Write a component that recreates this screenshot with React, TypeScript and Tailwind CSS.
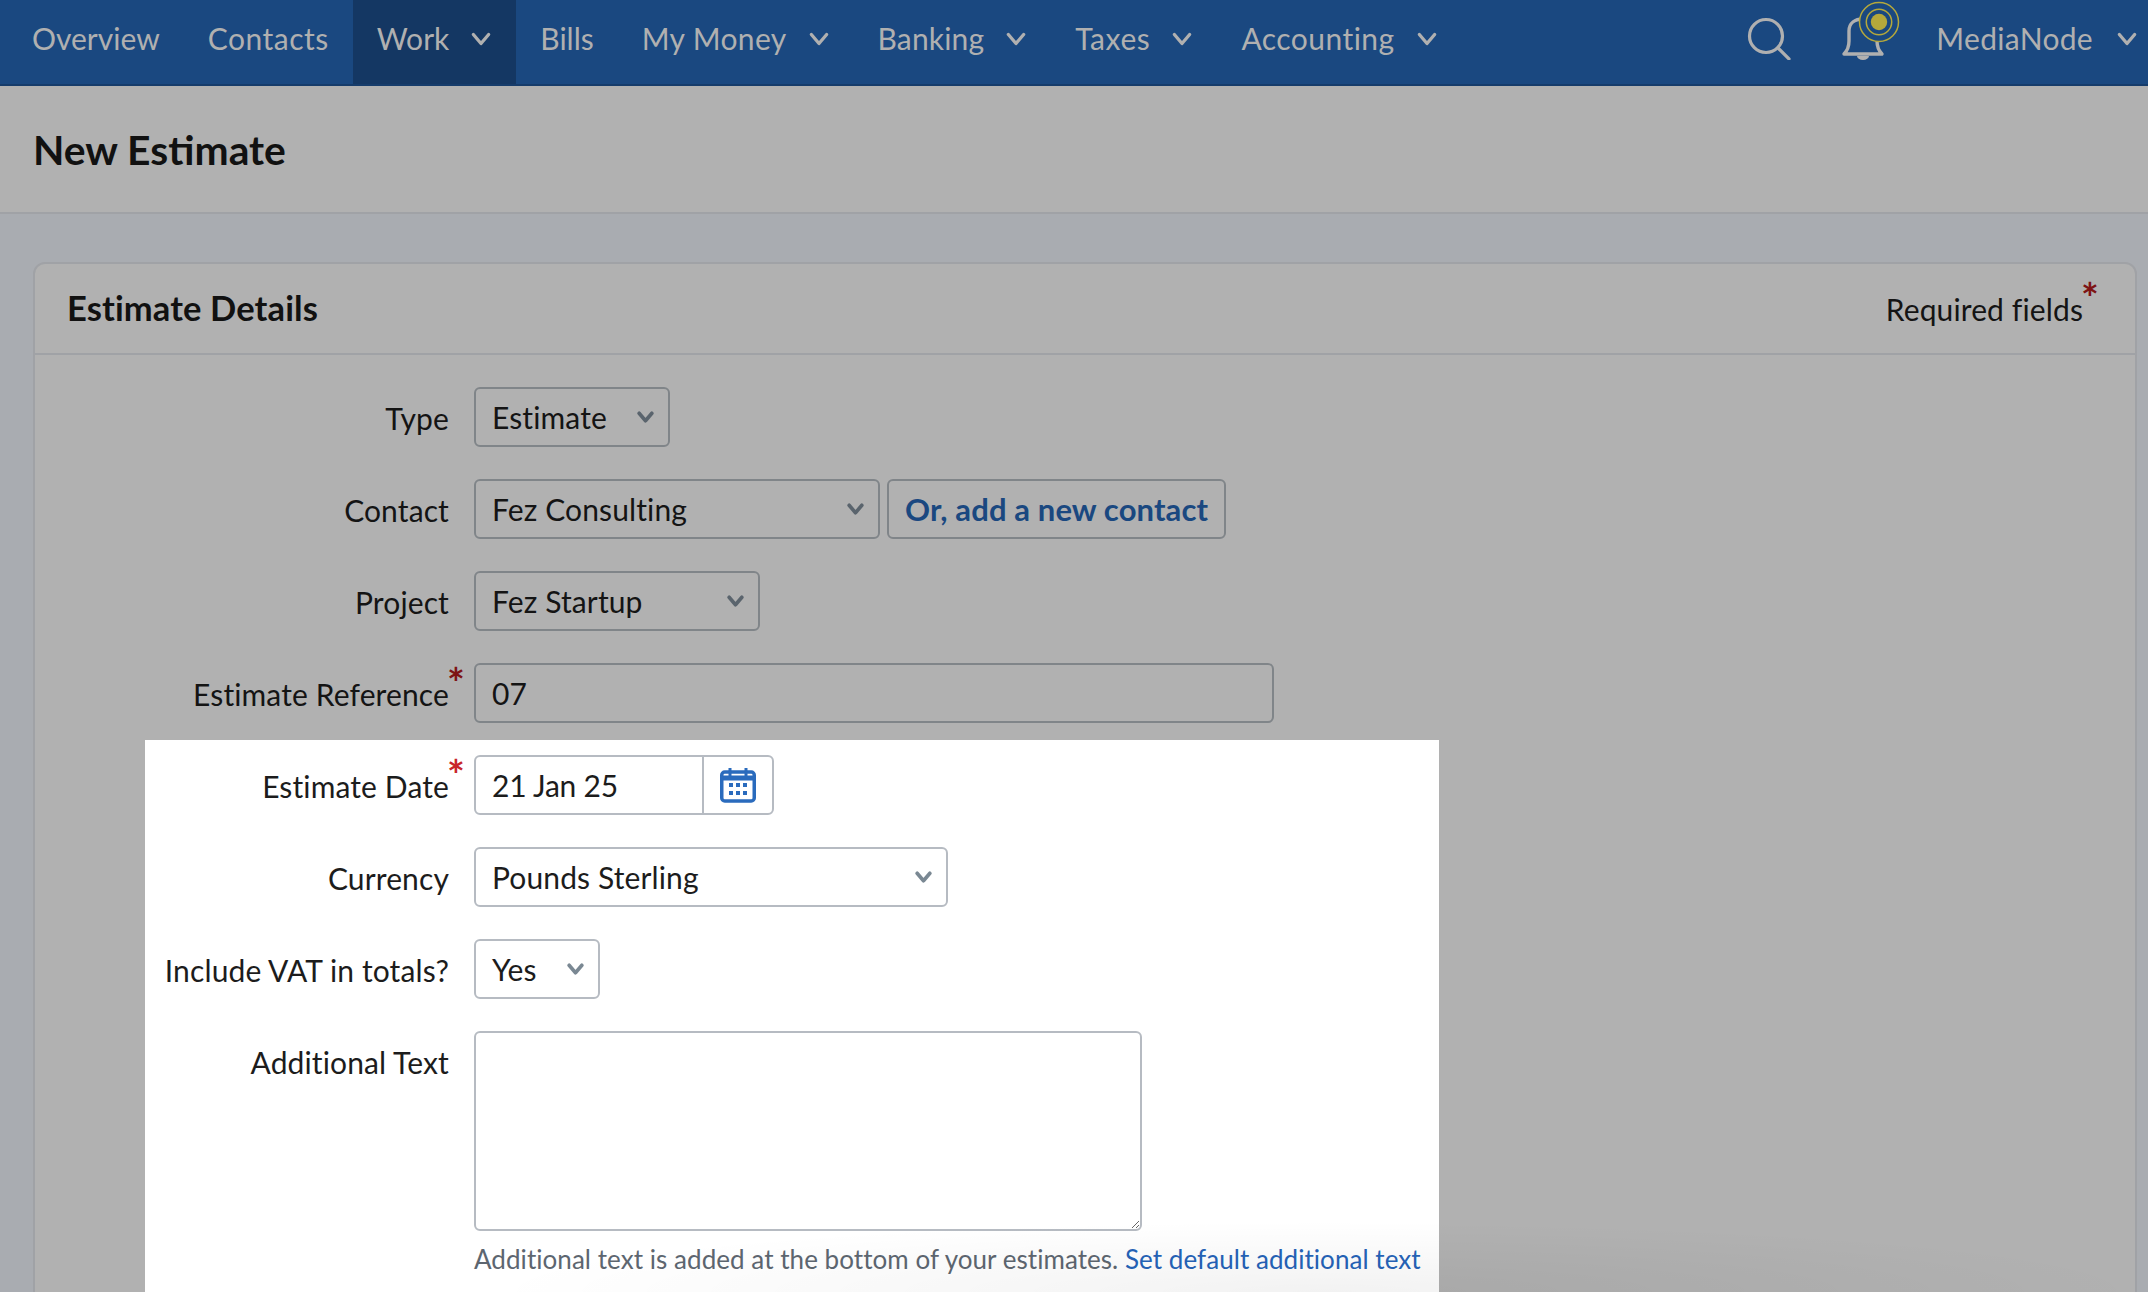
import React from "react";

const NAV_ITEMS = [
  { label: "Overview", tracking: "" },
  { label: "Contacts", tracking: "tracking-[0.5px]" },
  { label: "Work", caret: true, active: true, tracking: "" },
  { label: "Bills", tracking: "" },
  { label: "My Money", caret: true, tracking: "tracking-[0.35px]" },
  { label: "Banking", caret: true, tracking: "tracking-[0.15px]" },
  { label: "Taxes", caret: true, tracking: "tracking-[0.6px]" },
  { label: "Accounting", caret: true, tracking: "tracking-[0.45px]" },
];

function Chevron({ className, weight = 2.6 }: { className?: string; weight?: number }) {
  return (
    <svg viewBox="0 0 16 11" fill="none" className={className}>
      <path d="M2 2l6 7 6-7" stroke="currentColor" strokeWidth={weight} strokeLinecap="round" strokeLinejoin="round" />
    </svg>
  );
}

function Star({ className }: { className?: string }) {
  return <span className={`absolute font-bold text-[42px] leading-none ${className}`}>*</span>;
}

function Label({ text, width, required, starColor }: { text: string; width: string; required?: boolean; starColor?: string }) {
  return (
    <div className={`${width} shrink-0 text-right pt-[3px] h-[60px] flex items-center justify-end`}>
      <span className="relative whitespace-nowrap">
        {text}
        {required && <Star className={`-right-[16px] -top-[10px] ${starColor}`} />}
      </span>
    </div>
  );
}

function Select({ text, width, onWhite }: { text: string; width: string; onWhite?: boolean }) {
  return (
    <div className={`${width} h-[60px] rounded-[6px] border-2 flex items-center justify-between pl-[16px] pr-[14px] ${onWhite ? "border-[#b6bbc2] bg-white" : "border-[#808589]"}`}>
      <span>{text}</span>
      <Chevron weight={3.4} className={`w-[17px] h-[12px] ${onWhite ? "text-[#7a8893]" : "text-[#5a646d]"}`} />
    </div>
  );
}

export default function App() {
  return (
    <div className="relative w-[2148px] h-[1292px] overflow-hidden bg-[#a9acb1] font-['Lato',sans-serif] text-[30px] text-[#141414]">
      <nav className="h-[86px] bg-[#1a4880] border-b-2 border-[#163c6b] flex items-stretch pl-[8px] text-[#b0b0b0]">
        {NAV_ITEMS.map((item) => (
          <div key={item.label} className={`flex items-center gap-[21px] px-[24px] pb-[8px] ${item.active ? "bg-[#143763]" : ""}`}>
            <span className={item.tracking}>{item.label}</span>
            {item.caret && <Chevron className="w-[22px] h-[14px] mt-[2px]" />}
          </div>
        ))}
        <div className="ml-auto flex items-center pr-[10px] pb-[8px]">
          <svg viewBox="0 0 44 44" className="w-[44px] h-[44px] mr-[50px]" fill="none" stroke="#b0b0b0" strokeWidth="3.2" strokeLinecap="round">
            <circle cx="19" cy="20" r="16.5" />
            <path d="M31 32l11 11" />
          </svg>
          <svg viewBox="0 0 60 60" className="w-[60px] h-[60px] mr-[35px] self-start" fill="none">
            <path d="M3 54c3-3 5-6 5-13V31c0-8 6-12 14-12s14 4 14 12v10c0 7 2 10 5 13z" stroke="#b0b0b0" strokeWidth="3.4" strokeLinejoin="round" />
            <path d="M16 56a6 4 0 0 0 12 0z" fill="#b0b0b0" />
            <circle cx="38" cy="22" r="19.5" stroke="#b5a83b" strokeWidth="1.5" fill="#1a4880" />
            <circle cx="38" cy="22" r="12.7" stroke="#b5a83b" strokeWidth="1.5" />
            <circle cx="38" cy="22" r="8.2" fill="#b5a83b" />
          </svg>
          <span className="tracking-[0.3px]">MediaNode</span>
          <Chevron className="w-[22px] h-[14px] mt-[2px] ml-[23px]" />
        </div>
      </nav>

      <div className="h-[128px] bg-[#b1b1b1] border-b-2 border-[#a0a2a6] flex items-center pl-[33px]">
        <h1 className="font-bold text-[40.8px] text-[#111] mt-[2px]">New Estimate</h1>
      </div>

      <div className="mt-[48px] ml-[33px] w-[2104px] rounded-t-[12px] border-2 border-[#a0a2a6] bg-[#b1b1b1] h-[1100px] tracking-[0.12px]">
        <div className="h-[91px] border-b-2 border-[#a0a2a6] flex items-center justify-between pl-[32px] pr-[52px]">
          <h2 className="font-bold text-[34.5px] text-[#111] mb-[2px]">Estimate Details</h2>
          <span className="relative mt-[2px]">
            Required fields
            <Star className="-right-[16px] -top-[10px] text-[#7e1414]" />
          </span>
        </div>

        <div className="pt-[32px] flex flex-col gap-[32px]">
          <div className="flex gap-[25px]">
            <Label text="Type" width="w-[414px]" />
            <Select text="Estimate" width="w-[196px]" />
          </div>
          <div className="flex gap-[25px]">
            <Label text="Contact" width="w-[414px]" />
            <div className="flex gap-[7px]">
              <Select text="Fez Consulting" width="w-[406px]" />
              <div className="h-[60px] w-[339px] rounded-[6px] border-2 border-[#808589] flex items-center pl-[16px] font-bold text-[31px] text-[#1a4880]">Or, add a new contact</div>
            </div>
          </div>
          <div className="flex gap-[25px]">
            <Label text="Project" width="w-[414px]" />
            <Select text="Fez Startup" width="w-[286px]" />
          </div>
          <div className="flex gap-[25px]">
            <Label text="Estimate Reference" width="w-[414px]" required starColor="text-[#7e1414]" />
            <div className="w-[800px] h-[60px] rounded-[6px] border-2 border-[#808589] flex items-center pl-[16px]">07</div>
          </div>
        </div>

        {/* the part of the form left bright by the dimmed overlay */}
        <div className="mt-[17px] ml-[110px] w-[1294px] pt-[15px] bg-white flex flex-col gap-[32px] h-[600px] text-[#1c1c1c]">
          <div className="flex gap-[25px]">
            <Label text="Estimate Date" width="w-[304px]" required starColor="text-[#c8262b]" />
            <div className="w-[300px] h-[60px] rounded-[6px] border-2 border-[#b6bbc2] flex items-stretch">
              <div className="w-[228px] flex items-center pl-[16px] border-r-2 border-[#b6bbc2] tracking-[-0.2px]">21 Jan 25</div>
              <div className="flex-1 flex items-center justify-center">
                <svg viewBox="0 0 36 36" className="w-[36px] h-[36px]" fill="none">
                  <rect x="1.75" y="5" width="32.5" height="29" rx="3" stroke="#2a6bbd" strokeWidth="3.5" />
                  <path d="M1.5 11h33" stroke="#2a6bbd" strokeWidth="5" />
                  <path d="M10 1v8M26 1v8" stroke="#2a6bbd" strokeWidth="3" />
                  <path d="M9 18h4M16 18h4M23 18h4M9 26h4M16 26h4M23 26h4" stroke="#2a6bbd" strokeWidth="4" />
                </svg>
              </div>
            </div>
          </div>
          <div className="flex gap-[25px]">
            <Label text="Currency" width="w-[304px]" />
            <Select text="Pounds Sterling" width="w-[474px]" onWhite />
          </div>
          <div className="flex gap-[25px]">
            <Label text="Include VAT in totals?" width="w-[304px]" />
            <Select text="Yes" width="w-[126px]" onWhite />
          </div>
          <div className="flex gap-[25px]">
            <Label text="Additional Text" width="w-[304px]" />
            <div>
              <textarea aria-label="Additional Text" className="block w-[668px] h-[200px] rounded-[6px] border-2 border-[#b6bbc2] outline-none resize" />
              <p className="mt-[9px] text-[26px] tracking-[0.05px] whitespace-nowrap text-[#5d6670]">
                Additional text is added at the bottom of your estimates. <span className="text-[#2563b8]">Set default additional text</span>
              </p>
            </div>
          </div>
        </div>
      </div>

      {/* soft shade along the bottom edge of the screenshot */}
      <div className="pointer-events-none absolute left-[500px] right-0 bottom-0 h-[70px] bg-[radial-gradient(ellipse_at_50%_100%,rgba(0,0,0,0.05),transparent_72%)]" />
    </div>
  );
}
